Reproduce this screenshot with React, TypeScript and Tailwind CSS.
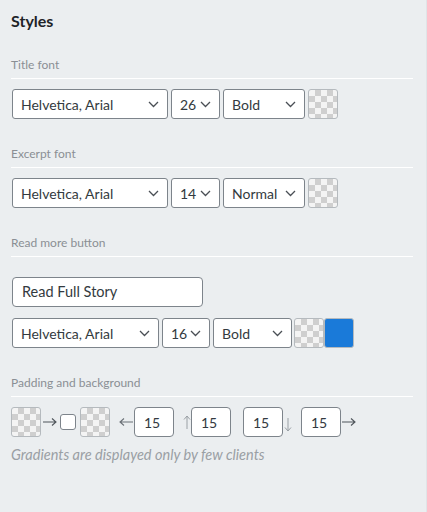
import React from 'react';

const checker =
  'bg-[conic-gradient(#cfcfcf_25%,#f4f4f4_0_50%,#cfcfcf_0_75%,#f4f4f4_0)] bg-[length:12px_12px]';

const Chevron = () => (
  <svg width="11" height="7" viewBox="0 0 11 7" fill="none" className="shrink-0">
    <path d="M1 1l4.5 4.5L10 1" stroke="#4a4f55" strokeWidth="1.3" />
  </svg>
);

const Select: React.FC<{ value: string; width: string }> = ({ value, width }) => (
  <div
    className={`${width} h-[30px] flex items-center justify-between bg-white border border-[#7d848b] rounded-[3px] pl-[8px] pr-[8px] text-[14px] text-[#333a40]`}
  >
    <span>{value}</span>
    <Chevron />
  </div>
);

const Swatch: React.FC<{ color?: string }> = ({ color }) => (
  <div
    className={`w-[30px] h-[30px] rounded-[3px] border border-[#b5babe] shrink-0 ${color ? 'bg-[#1a7ad9]' : checker}`}
  />
);

const Section: React.FC<{ label: string; first?: boolean; children: React.ReactNode }> = ({
  label,
  first,
  children,
}) => (
  <div className={first ? 'mt-[25px]' : 'mt-[28px]'}>
    <div className="h-[14px] leading-[14px] text-[12px] text-[#8a8f94]">{label}</div>
    <div className="mt-[6px] border-b border-white" />
    <div className="mt-[10px]">{children}</div>
  </div>
);

const NumBox: React.FC<{ value: string }> = ({ value }) => (
  <div className="w-[40px] h-[30px] bg-white border border-[#7d848b] rounded-[4px] flex items-center pl-[9px] text-[14px] text-[#333a40]">
    {value}
  </div>
);

// thin arrows drawn as svg: dir = right | left | up | down
const Arrow: React.FC<{ dir: 'right' | 'left' | 'up' | 'down'; color: string; className?: string }> = ({
  dir,
  color,
  className,
}) => {
  if (dir === 'right' || dir === 'left') {
    const d = dir === 'right' ? 'M0 5h13M9 1.5L13 5L9 8.5' : 'M14 5H1M5 1.5L1 5L5 8.5';
    return (
      <svg width="14" height="10" viewBox="0 0 14 10" fill="none" className={className}>
        <path d={d} stroke={color} strokeWidth="1.1" />
      </svg>
    );
  }
  const d = dir === 'up' ? 'M4 14V1M1 4.5L4 1L7 4.5' : 'M4 0v13M1 9.5L4 13L7 9.5';
  return (
    <svg width="8" height="14" viewBox="0 0 8 14" fill="none" className={className}>
      <path d={d} stroke={color} strokeWidth="1" />
    </svg>
  );
};

export default function App() {
  return (
    <div className="w-[427px] h-[512px] bg-[#ebeef0] border-r border-[#e0e4e7] font-['Lato','Noto_Sans',sans-serif] pl-[11px] pr-[13px] pt-[9px]">
      <div className="text-[16px] leading-[24px] font-bold text-[#1e2327]">Styles</div>

      <Section label="Title font" first>
        <div className="flex items-center gap-[3px] pl-[1px]">
          <Select value="Helvetica, Arial" width="w-[156px]" />
          <Select value="26" width="w-[49px]" />
          <Select value="Bold" width="w-[82px]" />
          <Swatch />
        </div>
      </Section>

      <Section label="Excerpt font">
        <div className="flex items-center gap-[3px] pl-[1px]">
          <Select value="Helvetica, Arial" width="w-[156px]" />
          <Select value="14" width="w-[49px]" />
          <Select value="Normal" width="w-[82px]" />
          <Swatch />
        </div>
      </Section>

      <Section label="Read more button">
        <div className="pl-[1px] pt-[10px]">
          <div className="w-[191px] h-[30px] bg-white border border-[#7d848b] rounded-[4px] flex items-center pl-[9px] text-[14.5px] text-[#333a40]">
            Read Full Story
          </div>
          <div className="flex items-center gap-[3px] mt-[11px]">
            <Select value="Helvetica, Arial" width="w-[147px]" />
            <Select value="16" width="w-[48px]" />
            <Select value="Bold" width="w-[79px]" />
            <div className="flex -ml-[1px]">
              <Swatch />
              <Swatch color="blue" />
            </div>
          </div>
        </div>
      </Section>

      <Section label="Padding and background">
        <div className="flex items-center">
          <Swatch />
          <Arrow dir="right" color="#4f555b" className="ml-[2px]" />
          <div className="w-[16px] h-[16px] bg-white border border-[#7d848b] rounded-[3px] ml-[3px]" />
          <div className="ml-[4px]">
            <Swatch />
          </div>
          <Arrow dir="left" color="#6b7177" className="ml-[9px] mr-[1px]" />
          <NumBox value="15" />
          <Arrow dir="up" color="#9aa0a5" className="ml-[9px]" />
          <NumBox value="15" />
          <div className="ml-[12px]">
            <NumBox value="15" />
          </div>
          <Arrow dir="down" color="#9aa0a5" className="ml-[1px] mt-[6px]" />
          <div className="ml-[9px]">
            <NumBox value="15" />
          </div>
          <Arrow dir="right" color="#4f555b" className="ml-[1px]" />
        </div>
        <div className="mt-[8px] italic text-[14.5px] leading-[20px] text-[#9a9fa4]">
          Gradients are displayed only by few clients
        </div>
      </Section>
    </div>
  );
}
